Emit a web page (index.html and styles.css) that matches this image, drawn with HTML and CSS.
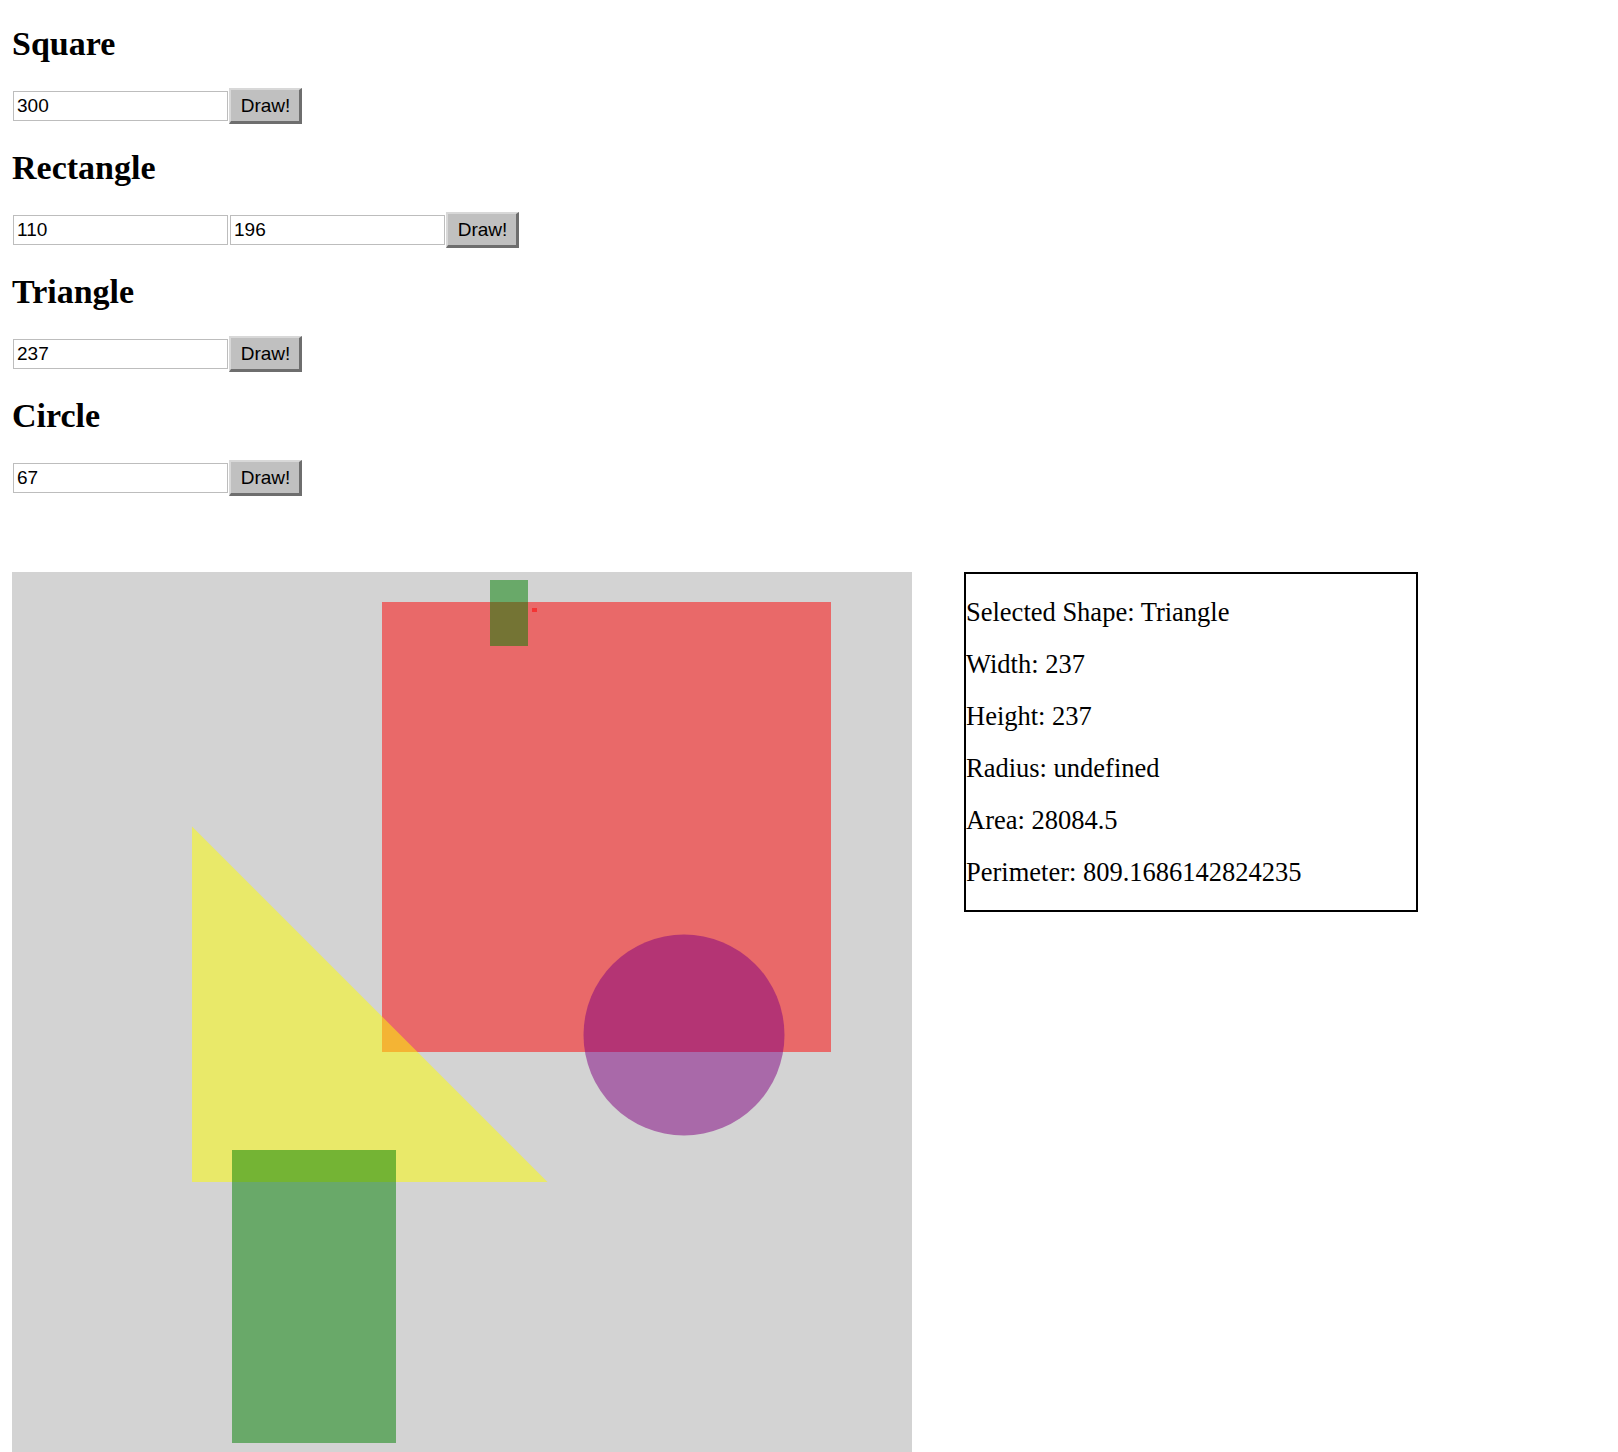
FILE: index.html
```html
<!DOCTYPE html>
<html lang="en">
<head>
<meta charset="utf-8">
<title>Shapes</title>
<link rel="stylesheet" href="styles.css">
</head>
<body>
  <section class="shape-form">
    <h3 class="shape-title">Square</h3>
    <div class="field-row">
      <input class="num-input" type="text" value="300">
      <button class="draw-btn" type="button">Draw!</button>
    </div>
  </section>
  <section class="shape-form">
    <h3 class="shape-title">Rectangle</h3>
    <div class="field-row">
      <input class="num-input" type="text" value="110">
      <input class="num-input" type="text" value="196">
      <button class="draw-btn" type="button">Draw!</button>
    </div>
  </section>
  <section class="shape-form">
    <h3 class="shape-title">Triangle</h3>
    <div class="field-row">
      <input class="num-input" type="text" value="237">
      <button class="draw-btn" type="button">Draw!</button>
    </div>
  </section>
  <section class="shape-form">
    <h3 class="shape-title">Circle</h3>
    <div class="field-row">
      <input class="num-input" type="text" value="67">
      <button class="draw-btn" type="button">Draw!</button>
    </div>
  </section>

  <div class="stage">
    <svg class="canvas" width="900" height="880" viewBox="0 0 900 880" xmlns="http://www.w3.org/2000/svg">
      <rect x="370" y="30" width="449" height="450" fill="rgb(255,0,0)" fill-opacity="0.5"/>
      <rect x="478" y="8" width="38" height="66" fill="rgb(0,128,0)" fill-opacity="0.5"/>
      <rect x="520" y="36" width="5" height="4" fill="rgb(255,0,0)" fill-opacity="0.5"/>
      <polygon points="180,254.5 180,610 535.5,610" fill="rgb(255,255,0)" fill-opacity="0.5"/>
      <circle cx="672" cy="463" r="100.5" fill="rgb(128,0,128)" fill-opacity="0.5"/>
      <rect x="220" y="578" width="164" height="293" fill="rgb(0,128,0)" fill-opacity="0.5"/>
    </svg>
    <div class="info">
      <p class="info-line">Selected Shape: Triangle</p>
      <p class="info-line">Width: 237</p>
      <p class="info-line">Height: 237</p>
      <p class="info-line">Radius: undefined</p>
      <p class="info-line">Area: 28084.5</p>
      <p class="info-line">Perimeter: 809.1686142824235</p>
    </div>
  </div>
</body>
</html>
```

FILE: styles.css
```css
html,
body {
  margin: 0;
}

body {
  padding: 0 12px;
  background: #fff;
  color: #000;
  font-family: "Liberation Serif", serif;
}

.shape-title {
  margin: 28px 0;
  font-size: 34px;
  line-height: 32px;
  font-weight: bold;
}

.field-row {
  display: flex;
  align-items: center;
  height: 36px;
}

.num-input {
  box-sizing: border-box;
  width: 215px;
  height: 30px;
  margin: 0 1px;
  padding: 0 3px;
  border: 1px solid #bdbdbd;
  border-radius: 0;
  background: #fff;
  color: #000;
  font: 19px "Liberation Sans", sans-serif;
  outline: none;
}

.draw-btn {
  box-sizing: border-box;
  width: 73px;
  height: 36px;
  margin: 0;
  padding: 0 0 0 1px;
  background: #c0c0c0;
  border-style: solid;
  border-width: 2px 3px 3px 2px;
  border-color: #d8d8d8 #6e6e6e #6e6e6e #d8d8d8;
  border-radius: 0;
  color: #000;
  font: 19px "Liberation Sans", sans-serif;
}

.stage {
  display: flex;
  align-items: flex-start;
  gap: 52px;
  margin-top: 76px;
}

.canvas {
  display: block;
  flex: none;
  width: 900px;
  height: 880px;
  background: #d3d3d3;
}

.info {
  box-sizing: border-box;
  flex: none;
  width: 454px;
  border: 2px solid #000;
}

.info-line {
  margin: 24px 0;
  font-size: 26.5px;
  line-height: 28px;
}
```
